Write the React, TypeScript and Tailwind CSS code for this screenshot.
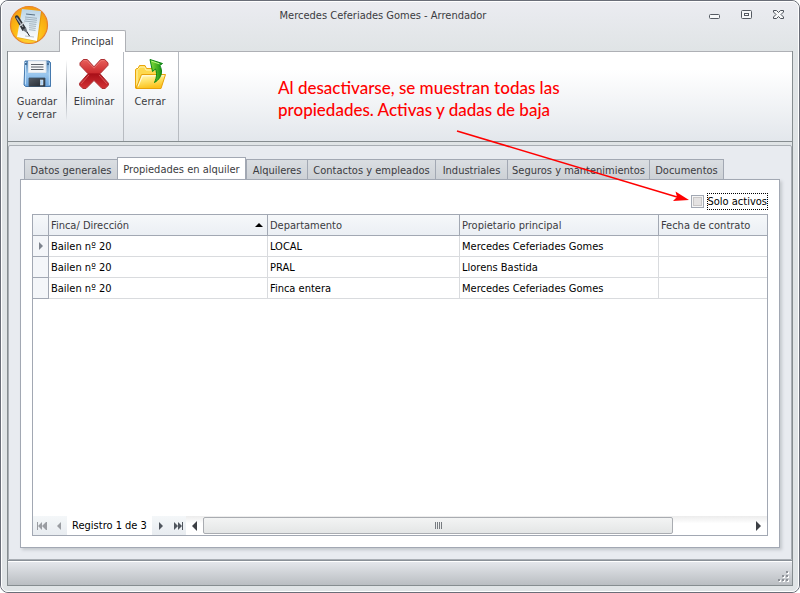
import React from "react";

type Tab = { label: string; width: string; active?: boolean };

const tabs: Tab[] = [
  { label: "Datos generales", width: "w-[93px]" },
  { label: "Propiedades en alquiler", width: "w-[129px]", active: true },
  { label: "Alquileres", width: "w-[61px]" },
  { label: "Contactos y empleados", width: "w-32" },
  { label: "Industriales", width: "w-18" },
  { label: "Seguros y mantenimientos", width: "w-[142px]" },
  { label: "Documentos", width: "w-[75px]" },
];

const rows = [
  ["Bailen nº 20", "LOCAL", "Mercedes Ceferiades Gomes", ""],
  ["Bailen nº 20", "PRAL", "Llorens Bastida", ""],
  ["Bailen nº 20", "Finca entera", "Mercedes Ceferiades Gomes", ""],
];

function AppLogo() {
  return (
    <svg width="40" height="40" viewBox="0 0 40 40" aria-hidden="true">
      <defs>
        <radialGradient id="orb" cx="0.5" cy="0.75" r="0.75">
          <stop offset="0" stopColor="#ffe14a" />
          <stop offset="0.5" stopColor="#fdbb14" />
          <stop offset="1" stopColor="#f39a10" />
        </radialGradient>
        <linearGradient id="paper" x1="0" y1="0" x2="0" y2="1">
          <stop offset="0" stopColor="#b9d4e6" />
          <stop offset="0.5" stopColor="#e2edf4" />
          <stop offset="1" stopColor="#ffffff" />
        </linearGradient>
      </defs>
      <circle cx="20" cy="20" r="18.5" fill="url(#orb)" stroke="#e8812a" strokeWidth="1.2" />
      <path d="M14 4 32 6 28 36 8 32Z" fill="#b97808" opacity=".35" transform="translate(1 1)" />
      <path d="M13 4 32 6 28 36 8 32Z" fill="url(#paper)" />
      <path d="M17 9 26 10" stroke="#5a7184" strokeWidth="1.2" />
      <path d="M16 12 28 13.3M16 14 28 15.3M15 16 27.6 17.3M20 18.7 27.3 19.4M20 20.7 27 21.4M20 22.7 26.7 23.4M20 24.7 26.5 25.4" stroke="#91a2af" strokeWidth=".8" />
      <path d="M16 31 25 32" stroke="#a9b5be" strokeWidth=".8" />
      <path d="M6 12.5C6 10 8.500 9.500 10 12L17 23 13.500 26Z" fill="#30343a" />
      <path d="M7.500 12.500 14 22" stroke="#aab0b8" strokeWidth="1.3" />
      <path d="M10.500 21 16 17" stroke="#d5d8dc" strokeWidth="1.400" />
      <path d="M13.500 25 17 22.500 19 28.500Z" fill="#6c727b" />
      <path d="M18 27 20.500 31" stroke="#22252a" strokeWidth="1" />
    </svg>
  );
}

function SaveIcon() {
  return (
    <svg width="32" height="32" viewBox="0 0 32 32" aria-hidden="true">
      <defs>
        <linearGradient id="disk" x1="0" y1="0" x2="0" y2="1">
          <stop offset="0" stopColor="#5e8dbb" />
          <stop offset="0.5" stopColor="#9cc8ee" />
          <stop offset="1" stopColor="#6ba3dc" />
        </linearGradient>
        <linearGradient id="shutter" x1="0" y1="0" x2="1" y2="1">
          <stop offset="0" stopColor="#555d66" />
          <stop offset="1" stopColor="#20262e" />
        </linearGradient>
      </defs>
      <path d="M4 3H28L29.500 4.500V28.500H4.500L3 27Z" fill="url(#disk)" stroke="#4579ae" />
      <path d="M4.500 4V26.500M28.300 5V27" stroke="#bfe0fa" strokeWidth="1" />
      <rect x="4" y="5" width="2" height="2" fill="#456f99" />
      <rect x="26" y="5" width="2" height="2" fill="#456f99" />
      <path d="M7.500 3V14.500H25V3Z" fill="#f4f6f8" stroke="#dfe7ef" />
      <path d="M10 6.500H22.500M10 9H22.500M10 11.500H22.500" stroke="#5a616a" strokeWidth="1" />
      <path d="M8 20H24V28.500H8Z" fill="url(#shutter)" stroke="#3e5368" strokeWidth=".8" />
      <rect x="19.500" y="22" width="2.500" height="5" fill="#a9cff3" stroke="#e0eefa" strokeWidth=".6" />
    </svg>
  );
}

function DeleteIcon() {
  return (
    <svg width="32" height="32" viewBox="0 0 32 32" aria-hidden="true">
      <defs>
        <linearGradient id="cross" x1="0" y1="0" x2="0" y2="1">
          <stop offset="0" stopColor="#e8605c" />
          <stop offset="0.45" stopColor="#cd2d30" />
          <stop offset="0.5" stopColor="#a90f18" />
          <stop offset="1" stopColor="#d33336" />
        </linearGradient>
      </defs>
      <path d="M5.300 1.500H9.300L16 8.800 22.700 1.500H26.700L30 4.800V7.300L22 15.700 30.400 25.200V27.300L27 30.500H24L16 22.500 8 30.500H5L1.600 27.300V25.200L10 15.700 2 7.300V4.800Z" fill="url(#cross)" stroke="#ad3034" strokeLinejoin="round" />
      <path d="M5.600 2.600H8.900L16 10.200 23.100 2.600H26.400M3.200 25.800 11 16.900M28.800 25.800 21 16.900" fill="none" stroke="#f08a84" strokeWidth=".8" opacity=".7" />
    </svg>
  );
}

function CloseFolderIcon() {
  return (
    <svg width="32" height="32" viewBox="0 0 32 32" aria-hidden="true">
      <defs>
        <linearGradient id="folder" x1="0" y1="0" x2="0.3" y2="1">
          <stop offset="0" stopColor="#fffbd0" />
          <stop offset="0.5" stopColor="#ffe36b" />
          <stop offset="1" stopColor="#fbc21c" />
        </linearGradient>
        <linearGradient id="arrowUp" x1="0" y1="0" x2="1" y2="0">
          <stop offset="0" stopColor="#86e03a" />
          <stop offset="1" stopColor="#128a10" />
        </linearGradient>
      </defs>
      <path d="M1.500 30V11.500L2.500 10.500H4L5.500 7.500H11L12.500 10.500H24.500V30Z" fill="#fdd84d" stroke="#e9a50c" strokeLinejoin="round" />
      <path d="M3 27V12.500L6 9H10.500L12 12H24" fill="none" stroke="#fff3ac" />
      <path d="M2 30.500 7.500 16.500H31.500L27 30.500Z" fill="url(#folder)" stroke="#e8a10a" strokeLinejoin="round" />
      <path d="M4 28.500 8.500 17.800H30" fill="none" stroke="#fffbe0" />
      <path d="M16 1.500 28.500 5.500 25.800 7.500C29 13 28 20 20.500 24.500 23 19 23 15 21.500 11L18.500 13.500Z" fill="url(#arrowUp)" stroke="#0c8414" strokeLinejoin="round" />
      <path d="M17.500 3.200 25.500 5.900" stroke="#b8f47c" strokeWidth="1" />
    </svg>
  );
}

function RibbonButton({ icon, children, width }: { icon: React.ReactNode; children: React.ReactNode; width: string }) {
  return (
    <button type="button" className={`flex flex-col items-center gap-1 pt-1.5 leading-[13px] ${width}`}>
      {icon}
      <span className="pt-px">{children}</span>
    </button>
  );
}

function Ribbon() {
  return (
    <div role="toolbar" aria-label="Principal" className="flex h-[91px] border-t border-b border-t-[#aeb0b5] border-b-[#868d90] bg-linear-to-b from-white from-20% to-[#e3e7ec]">
      <div className="flex border-r border-[#b7bbc1]">
        <RibbonButton icon={<SaveIcon />} width="w-[58px]">
          Guardar
          <br />y cerrar
        </RibbonButton>
        <span className="mt-2 h-15 w-px bg-linear-to-b from-white via-[#8f949b] to-[#e9ecf0]" />
        <RibbonButton icon={<DeleteIcon />} width="w-14 pr-0.5">Eliminar</RibbonButton>
      </div>
      <div className="flex border-r border-[#b7bbc1]">
        <RibbonButton icon={<CloseFolderIcon />} width="w-[54px] pr-0.5">Cerrar</RibbonButton>
      </div>
    </div>
  );
}

function WindowControls() {
  return (
    <div className="flex h-[26px] items-center gap-4 pr-1.5">
      <button type="button" aria-label="Minimizar" className="p-0.5">
        <svg width="12" height="12" viewBox="0 0 12 12"><rect x=".5" y="5.500" width="10" height="4" rx="1" fill="#f7f8f9" stroke="#555a62" /></svg>
      </button>
      <button type="button" aria-label="Maximizar" className="p-0.5">
        <svg width="12" height="12" viewBox="0 0 12 12"><rect x=".5" y="1.500" width="10" height="8" rx="1" fill="#f7f8f9" stroke="#555a62" /><rect x="3.500" y="4.500" width="4" height="2" fill="#fff" stroke="#555a62" /></svg>
      </button>
      <button type="button" aria-label="Cerrar ventana" className="p-0.5">
        <svg width="12" height="12" viewBox="0 0 12 12"><path d="M.5 1.500H3.500L5.500 3.500 7.500 1.500H10.500V3L8 5.500 10.500 8V9.500H7.500L5.500 7.500 3.500 9.500H.5V8L3 5.500.5 3Z" fill="#f7f8f9" stroke="#4c5159" strokeLinejoin="round" /></svg>
      </button>
    </div>
  );
}

function TabStrip() {
  return (
    <div role="tablist" className="ml-1 flex items-end">
      {tabs.map((tab) => (
        <button
          key={tab.label}
          type="button"
          role="tab"
          aria-selected={!!tab.active}
          className={`${tab.width} border-t border-l border-[#a2a8b3] text-center whitespace-nowrap last:border-r ${
            tab.active ? "-mb-px h-[23px] border-r bg-white" : "h-5 bg-linear-to-b from-[#dadee2] to-[#cdd1d6] pt-px"
          }`}
        >
          {tab.label}
        </button>
      ))}
    </div>
  );
}

const headCell = "h-[21px] border-b border-[#a2a8b3] bg-linear-to-b from-[#f6f8fa] to-[#ebeff4] px-0.5 text-left font-normal";
const bodyCell = "h-[21px] border-b border-[#d9dbde] px-0.5 text-black";

function PropertyTable() {
  return (
    <table className="w-full table-fixed border-separate border-spacing-0">
      <colgroup>
        <col className="w-4" />
        <col className="w-[219px]" />
        <col className="w-48" />
        <col className="w-[199px]" />
        <col />
      </colgroup>
      <thead>
        <tr>
          <th className={`${headCell} border-r`} />
          <th className={`${headCell} border-r`} aria-sort="ascending">
            <div className="flex items-center justify-between pr-0.5">
              Finca/ Dirección
              <svg width="8" height="4" viewBox="0 0 8 4" aria-hidden="true"><path d="M0 4 4 0 8 4Z" fill="#000" /></svg>
            </div>
          </th>
          <th className={`${headCell} border-r`}>Departamento</th>
          <th className={`${headCell} border-r`}>Propietario principal</th>
          <th className={headCell}>Fecha de contrato</th>
        </tr>
      </thead>
      <tbody>
        {rows.map((row, i) => (
          <tr key={i}>
            <td className="border-r border-b border-[#a2a8b3] bg-[#f4f6f9]">
              {i === 0 && (
                <svg className="ml-1.5" width="4" height="8" viewBox="0 0 4 8" aria-hidden="true"><path d="M0 0 4 4 0 8Z" fill="#7d838d" /></svg>
              )}
            </td>
            {row.map((value, j) => (
              <td key={j} className={`${bodyCell} ${j < 3 ? "border-r" : ""}`}>{value}</td>
            ))}
          </tr>
        ))}
      </tbody>
    </table>
  );
}

const navButton = "flex w-[17px] items-center justify-center bg-linear-to-b from-[#f4f7f9] to-[#e8ecf0]";

function Navigator() {
  return (
    <div className="flex h-[19px] text-black">
      <button type="button" disabled aria-label="Primer registro" className={navButton}>
        <svg width="10" height="8" viewBox="0 0 10 8"><path d="M0 0H1V8H0ZM5 0V8L1 4ZM9 0V8L5 4ZM9 0H10V8H9Z" fill="#9a9da2" /></svg>
      </button>
      <button type="button" disabled aria-label="Registro anterior" className={navButton}>
        <svg width="4" height="8" viewBox="0 0 4 8"><path d="M4 0V8L0 4Z" fill="#9a9da2" /></svg>
      </button>
      <span className="w-[85px] text-center leading-5 whitespace-nowrap">Registro 1 de 3</span>
      <button type="button" aria-label="Registro siguiente" className={navButton}>
        <svg width="4" height="8" viewBox="0 0 4 8"><path d="M0 0V8L4 4Z" fill="#50565e" /></svg>
      </button>
      <button type="button" aria-label="Último registro" className={navButton}>
        <svg width="10" height="8" viewBox="0 0 10 8"><path d="M1 0V8L5 4ZM5 0V8L9 4ZM9 0H10V8H9Z" fill="#50565e" /></svg>
      </button>
      <div className="flex flex-1 items-center bg-linear-to-b from-[#ececec] to-white to-40%">
        <button type="button" aria-label="Desplazar a la izquierda" className="flex w-[17px] justify-center">
          <svg width="5" height="10" viewBox="0 0 5 10"><path d="M5 0V10L0 5Z" fill="#3c3f44" /></svg>
        </button>
        <div className="flex flex-1">
          <div className="flex h-[17px] w-[86%] items-center justify-center gap-px rounded-xs border border-[#a9acb1] bg-linear-to-b from-[#f3f4f4] to-[#e4e6e6]">
            <span className="h-[7px] w-px bg-[#777b80]" />
            <span className="h-[7px] w-px bg-[#777b80]" />
            <span className="h-[7px] w-px bg-[#777b80]" />
            <span className="h-[7px] w-px bg-[#777b80]" />
          </div>
        </div>
        <button type="button" aria-label="Desplazar a la derecha" className="flex w-[17px] justify-center">
          <svg width="5" height="10" viewBox="0 0 5 10"><path d="M0 0V10L5 5Z" fill="#3c3f44" /></svg>
        </button>
      </div>
    </div>
  );
}

function Annotation() {
  return (
    <div className="pointer-events-none absolute top-[76px] left-[277px]">
      <p className="font-['Lato','Open_Sans',sans-serif] text-[17px] leading-[22px] font-medium whitespace-nowrap text-[#ff0000]">
        Al desactivarse, se muestran todas las
        <br />
        propiedades. Activas y dadas de baja
      </p>
      <svg className="absolute top-[50px] left-[175px]" width="240" height="80" viewBox="0 0 240 80" aria-hidden="true">
        <path d="M4 4 224 70" stroke="#ff0000" strokeWidth="1.500" />
        <path d="M236 73 220 74 224 70 222.500 64.500Z" fill="#ff0000" />
      </svg>
    </div>
  );
}

export default function App() {
  return (
    <div className="relative flex min-h-screen flex-col rounded-lg border border-[#6a6e78] bg-[#e0e4e6] font-['DejaVu_Sans_Condensed','DejaVu_Sans',sans-serif] text-[11px] leading-[13px] text-[#3b3b41]">
      <div className="flex flex-1 flex-col rounded-[7px] border border-white bg-linear-to-b from-[#ebecf1] to-[#e0e4e6] to-[48px] px-[5px] pb-[5px]">
        <header className="flex h-[49px]">
          <div className="w-13 pt-[3px] pl-0.5"><AppLogo /></div>
          <div className="flex flex-1 flex-col justify-between">
            <h1 className="pt-[7px] text-center">Mercedes Ceferiades Gomes - Arrendador</h1>
            <button type="button" className="z-10 -mb-px h-[22px] w-[67px] rounded-t-xs border border-b-0 border-[#aeb0b5] bg-white">Principal</button>
          </div>
          <WindowControls />
        </header>
        <div className="flex flex-1 flex-col border-x border-b border-[#868d90]">
          <Ribbon />
          <main className="mt-[3px] flex flex-1 flex-col rounded-t-xs border border-[#a9aeb4] bg-[#e8ebf0] px-[11px] pt-[11px] pb-[11px]">
            <TabStrip />
            <section className="flex flex-1 flex-col border border-[#a2a8b3] bg-white px-[11px] pb-[11px] shadow-[2px_2px_3px_#c3c7cc]">
              <div className="flex h-[34px] items-center justify-end gap-[3px] pt-2">
                <input id="solo-activos" type="checkbox" className="size-[13px] appearance-none border border-[#a2a8b3] bg-[#e4e2e2] shadow-[inset_0_0_0_1px_#f6f6f6,inset_0_0_0_2px_#c9c7c7]" />
                <label htmlFor="solo-activos" className="border border-dotted border-black py-px text-black">Solo activos</label>
              </div>
              <div className="flex flex-1 flex-col justify-between border border-[#a2a8b3]">
                <PropertyTable />
                <Navigator />
              </div>
            </section>
          </main>
          <footer className="flex h-[25px] items-end justify-end border-t border-[#8a9098] bg-linear-to-b from-[#e6e8ed] to-[#babec2] p-0.5 shadow-[inset_0_1px_0_#fff]">
            <svg width="12" height="12" viewBox="0 0 12 12" aria-hidden="true">
              <path d="M9 1h2v2h-2zM5 5h2v2h-2zM9 5h2v2h-2zM1 9h2v2h-2zM5 9h2v2h-2zM9 9h2v2h-2z" fill="#fff" />
              <path d="M8 0h2v2h-2zM4 4h2v2h-2zM8 4h2v2h-2zM0 8h2v2h-2zM4 8h2v2h-2zM8 8h2v2h-2z" fill="#8d9197" />
            </svg>
          </footer>
        </div>
      </div>
      <Annotation />
    </div>
  );
}
